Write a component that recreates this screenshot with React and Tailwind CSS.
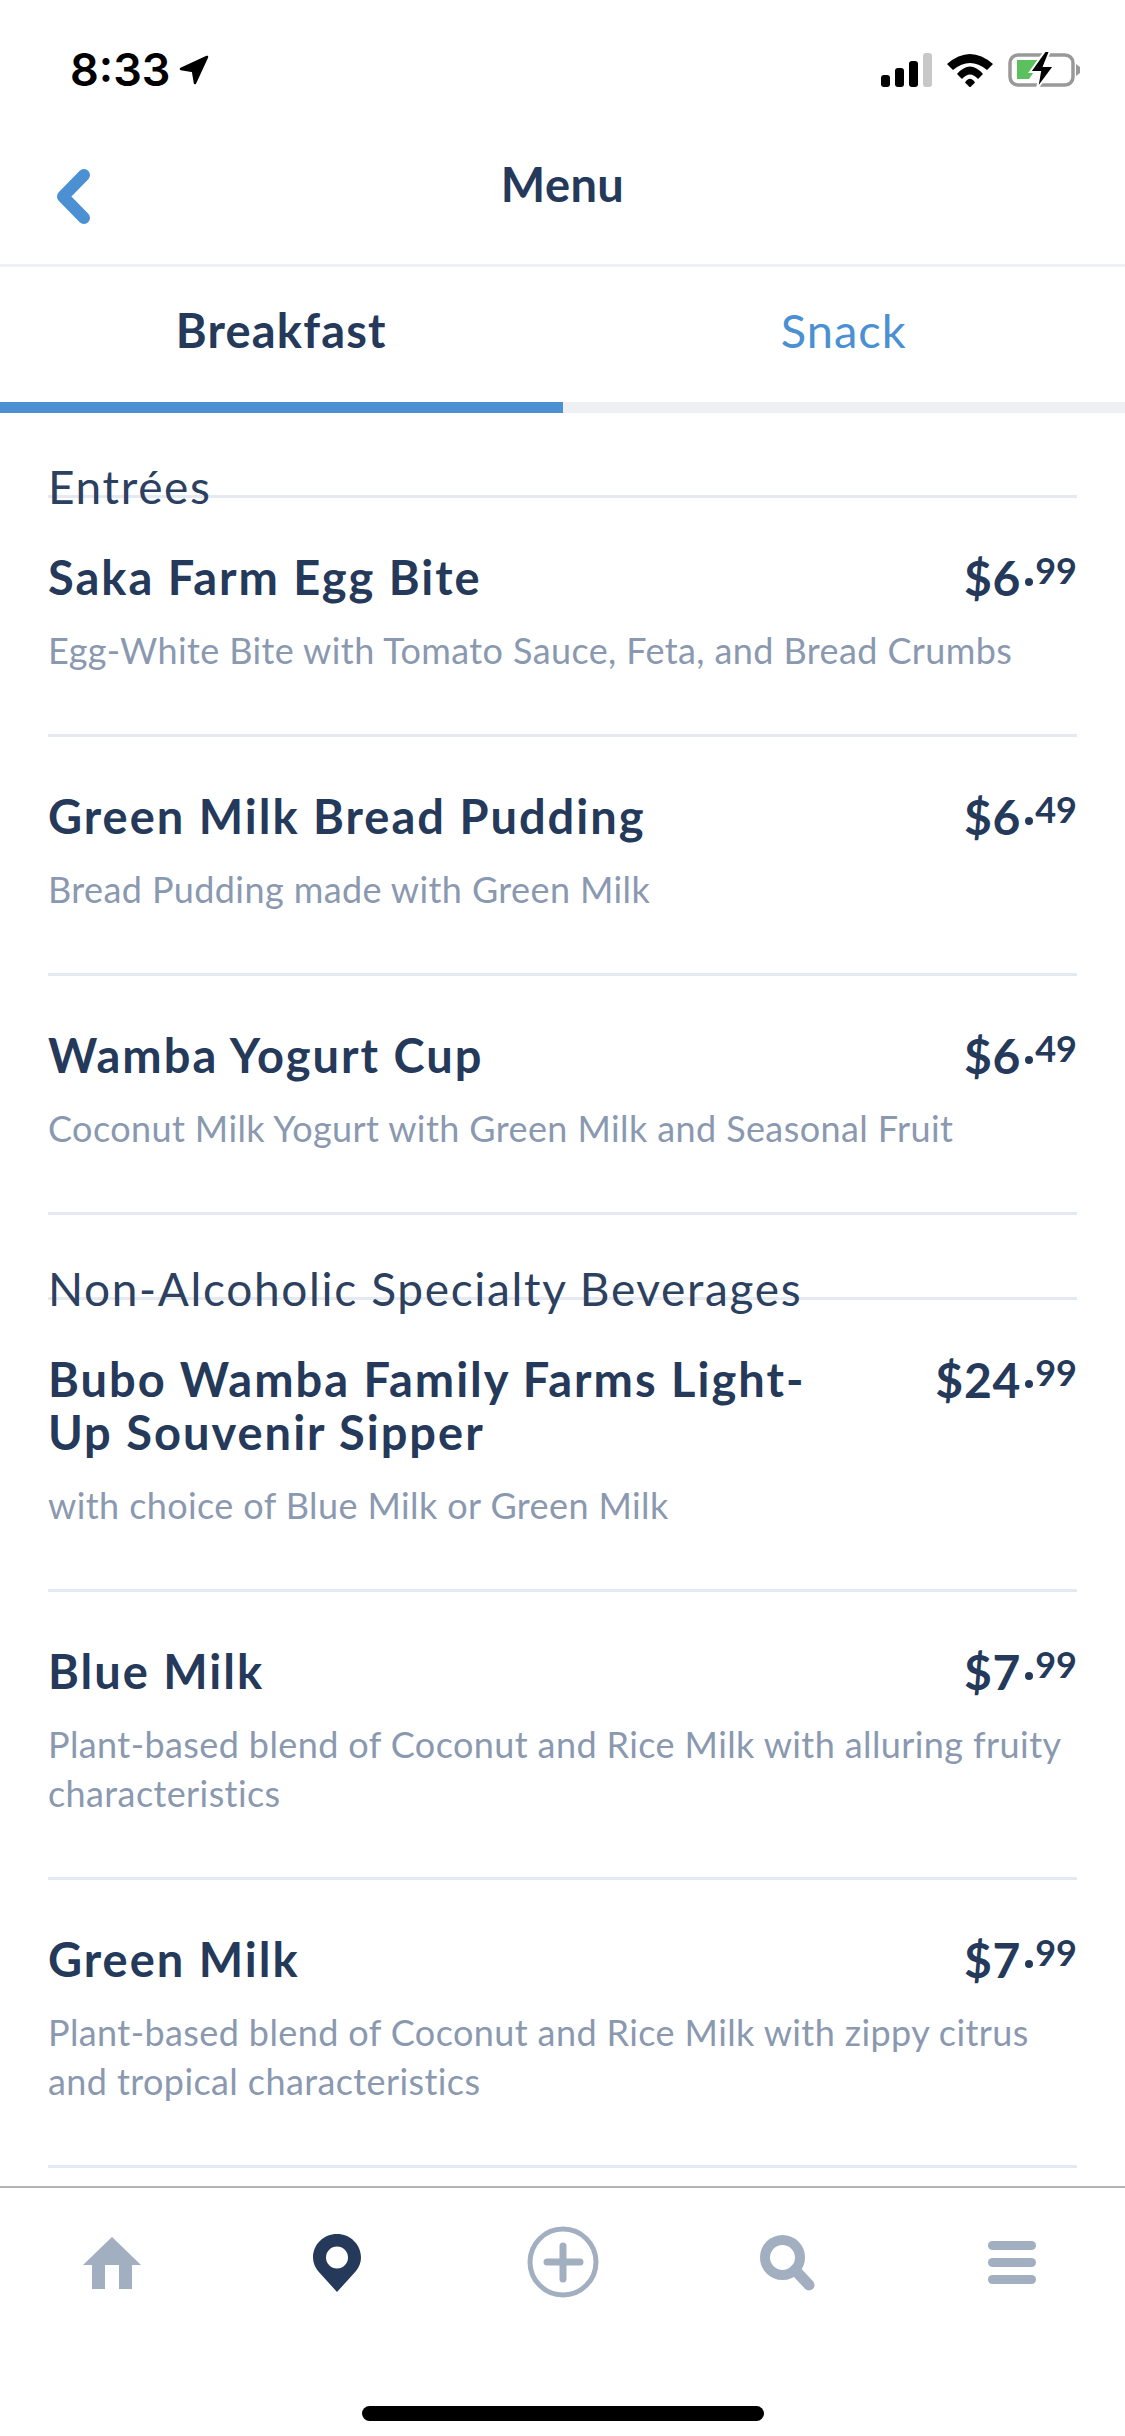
// Pantalla de menú: barra de estado, pestañas, lista de platos y barra inferior.

const SECTIONS = [
  {
    title: 'Entrées',
    items: [
      { name: 'Saka Farm Egg Bite', desc: 'Egg-White Bite with Tomato Sauce, Feta, and Bread Crumbs', dollars: '6', cents: '99' },
      { name: 'Green Milk Bread Pudding', desc: 'Bread Pudding made with Green Milk', dollars: '6', cents: '49' },
      { name: 'Wamba Yogurt Cup', desc: 'Coconut Milk Yogurt with Green Milk and Seasonal Fruit', dollars: '6', cents: '49' },
    ],
  },
  {
    title: 'Non-Alcoholic Specialty Beverages',
    items: [
      { name: 'Bubo Wamba Family Farms Light-Up Souvenir Sipper', desc: 'with choice of Blue Milk or Green Milk', dollars: '24', cents: '99' },
      { name: 'Blue Milk', desc: 'Plant-based blend of Coconut and Rice Milk with alluring fruity characteristics', dollars: '7', cents: '99' },
      { name: 'Green Milk', desc: 'Plant-based blend of Coconut and Rice Milk with zippy citrus and tropical characteristics', dollars: '7', cents: '99' },
    ],
  },
]

function StatusBar() {
  return (
    <div className="flex h-[100px] items-start justify-between pl-[70px] pr-[43px] pt-[52px]">
      <div className="flex items-center">
        <span className="font-['Inter',sans-serif] text-[45px] font-semibold leading-[36px] text-black">8:33</span>
        <svg className="ml-[9px] h-[30px] w-[30px]" viewBox="0 0 30 30">
          <path d="M28 2 2 14 14 16 16 28Z" fill="#000" stroke="#000" strokeWidth="2.500" strokeLinejoin="round" />
        </svg>
      </div>
      <div className="flex items-center">
        <svg className="h-[34px] w-[52px]" viewBox="0 0 52 34" fill="#000">
          <rect x="0" y="22" width="9" height="12" rx="3" />
          <rect x="14" y="15" width="9" height="19" rx="3" />
          <rect x="28" y="8" width="9" height="26" rx="3" />
          <rect x="42" y="0" width="9" height="34" rx="3" fill="#c8c8c8" />
        </svg>
        <svg className="ml-[14px] h-[34px] w-[46px]" viewBox="0 0 46 34" fill="#000">
          <path d="M0 11Q23-9 46 11L40 17Q23 3 6 17Z" />
          <path d="M10 21Q23 6 36 21L31 26Q23 17 15 26Z" />
          <path d="M18 29.500Q23 22 28 29.500L23 34.500Z" />
        </svg>
        <svg className="ml-[15px] h-[36px] w-[74px]" viewBox="0 0 74 36">
          <rect x="2" y="3" width="63" height="30" rx="8" fill="none" stroke="#999" strokeWidth="3.500" />
          <path d="M9 8H34L21 27H9Z" fill="#5ac15e" />
          <path d="M37-1 22 20H32L29 37 46 14H36L42-1Z" fill="#000" stroke="#fff" strokeWidth="2" />
          <path d="M68 12 72 15V21L68 24Z" fill="#999" />
        </svg>
      </div>
    </div>
  )
}

function NavBar() {
  return (
    <div className="grid h-[167px] grid-cols-[1fr_auto_1fr] items-start border-b-[3px] border-[#eef1f5]">
      <svg className="ml-[57px] mt-[69px] h-[55px] w-[34px]" viewBox="0 0 34 55" fill="none">
        <path d="M27 6 6 27.500 27 49" stroke="#4a90d3" strokeWidth="12" strokeLinecap="round" strokeLinejoin="round" />
      </svg>
      <span className="mt-[57px] font-['Lato',sans-serif] text-[47px] font-bold leading-[54px] tracking-[0.4px] text-[#25395a]">Menu</span>
    </div>
  )
}

function Tabs() {
  return (
    <div>
      <div className="flex h-[135px] pb-[8px]">
        <div className="flex flex-1 items-center justify-center font-['Lato',sans-serif] text-[47px] font-bold tracking-[1.2px] text-[#25395a]">Breakfast</div>
        <div className="flex flex-1 items-center justify-center font-['Lato',sans-serif] text-[47px] tracking-[1px] text-[#4a90d3]">Snack</div>
      </div>
      <div className="flex h-[11px]">
        <div className="flex-1 bg-[#4a90d3]"></div>
        <div className="flex-1 bg-[#eef0f3]"></div>
      </div>
    </div>
  )
}

function Price({ dollars, cents }) {
  return (
    <div className="flex shrink-0 items-start text-[#25395a]">
      <span className="text-[48px] font-bold leading-[53px] tracking-[0.8px]">${dollars}</span>
      <span className="ml-[4px] mt-[27px] h-[8px] w-[8px] rounded-full bg-[#25395a]"></span>
      <span className="ml-[2px] text-[36px] font-bold leading-[38px]">{cents}</span>
    </div>
  )
}

function MenuItem({ item }) {
  return (
    <div className="border-b-[3px] border-[#e4e9f2] pb-[59px] pt-[53px]">
      <div className="flex items-start justify-between">
        <div className="w-[790px] text-[47px] font-bold leading-[53px] tracking-[2px] text-[#25395a]">{item.name}</div>
        <Price dollars={item.dollars} cents={item.cents} />
      </div>
      <div className="mt-[22px] text-[36px] leading-[49px] tracking-[0.4px] text-[#8a99b0]">{item.desc}</div>
    </div>
  )
}

function Section({ section }) {
  return (
    <div>
      <div className="h-[85px] border-b-[3px] border-[#e4e9f2] pt-[46px] text-[46px] leading-[56px] tracking-[1.650px] text-[#2c4060]">
        {section.title}
      </div>
      {section.items.map((item) => (
        <MenuItem key={item.name} item={item} />
      ))}
    </div>
  )
}

function BottomBar() {
  return (
    <div className="border-t-[2px] border-[#b4b4b4]">
      <div className="flex h-[248px] flex-col">
        <div className="flex h-[218px] items-start pl-[83px] pt-[38px]">
          <svg className="mt-[11px] h-[52px] w-[58px] shrink-0" viewBox="0 0 58 52" fill="#a2afc1">
            <path d="M29 0 58 28H49V52H36V28H22V52H9V28H0Z" />
          </svg>
          <svg className="ml-[172px] mt-[8px] h-[58px] w-[48px] shrink-0" viewBox="0 0 48 58">
            <path fillRule="evenodd" fill="#25395a" d="M24 0C10.700 0 0 10.500 0 23.500 0 29 2 33 5 37L24 58 43 37C46 33 48 29 48 23.500 48 10.500 37.300 0 24 0ZM24 12.500A11 11 0 1 1 23.999 34.500 11 11 0 0 1 24 12.500Z" />
          </svg>
          <svg className="ml-[166px] h-[72px] w-[72px] shrink-0" viewBox="0 0 72 72" fill="none" stroke="#a2afc1">
            <circle cx="36" cy="36" r="33" strokeWidth="5" />
            <path d="M36 20V53M20 36H53" strokeWidth="7" strokeLinecap="round" />
          </svg>
          <svg className="ml-[161px] mt-[9px] h-[57px] w-[56px] shrink-0" viewBox="0 0 56 57" fill="none" stroke="#a2afc1">
            <circle cx="22.500" cy="22.500" r="17.500" strokeWidth="10" />
            <path d="M35 35 49 50" strokeWidth="11" strokeLinecap="round" />
          </svg>
          <div className="ml-[172px] mt-[15px] flex w-[48px] shrink-0 flex-col gap-[8px]">
            <div className="h-[9px] rounded-full bg-[#a2afc1]"></div>
            <div className="h-[9px] rounded-full bg-[#a2afc1]"></div>
            <div className="h-[9px] rounded-full bg-[#a2afc1]"></div>
          </div>
        </div>
        <div className="mx-auto h-[15px] w-[402px] rounded-full bg-black"></div>
      </div>
    </div>
  )
}

export default function App() {
  return (
    <div className="flex h-[2436px] w-[1125px] flex-col overflow-hidden bg-white font-['Lato',sans-serif]">
      <StatusBar />
      <NavBar />
      <Tabs />
      <div className="flex-1 overflow-hidden px-[48px]">
        {SECTIONS.map((section) => (
          <Section key={section.title} section={section} />
        ))}
      </div>
      <BottomBar />
    </div>
  )
}
